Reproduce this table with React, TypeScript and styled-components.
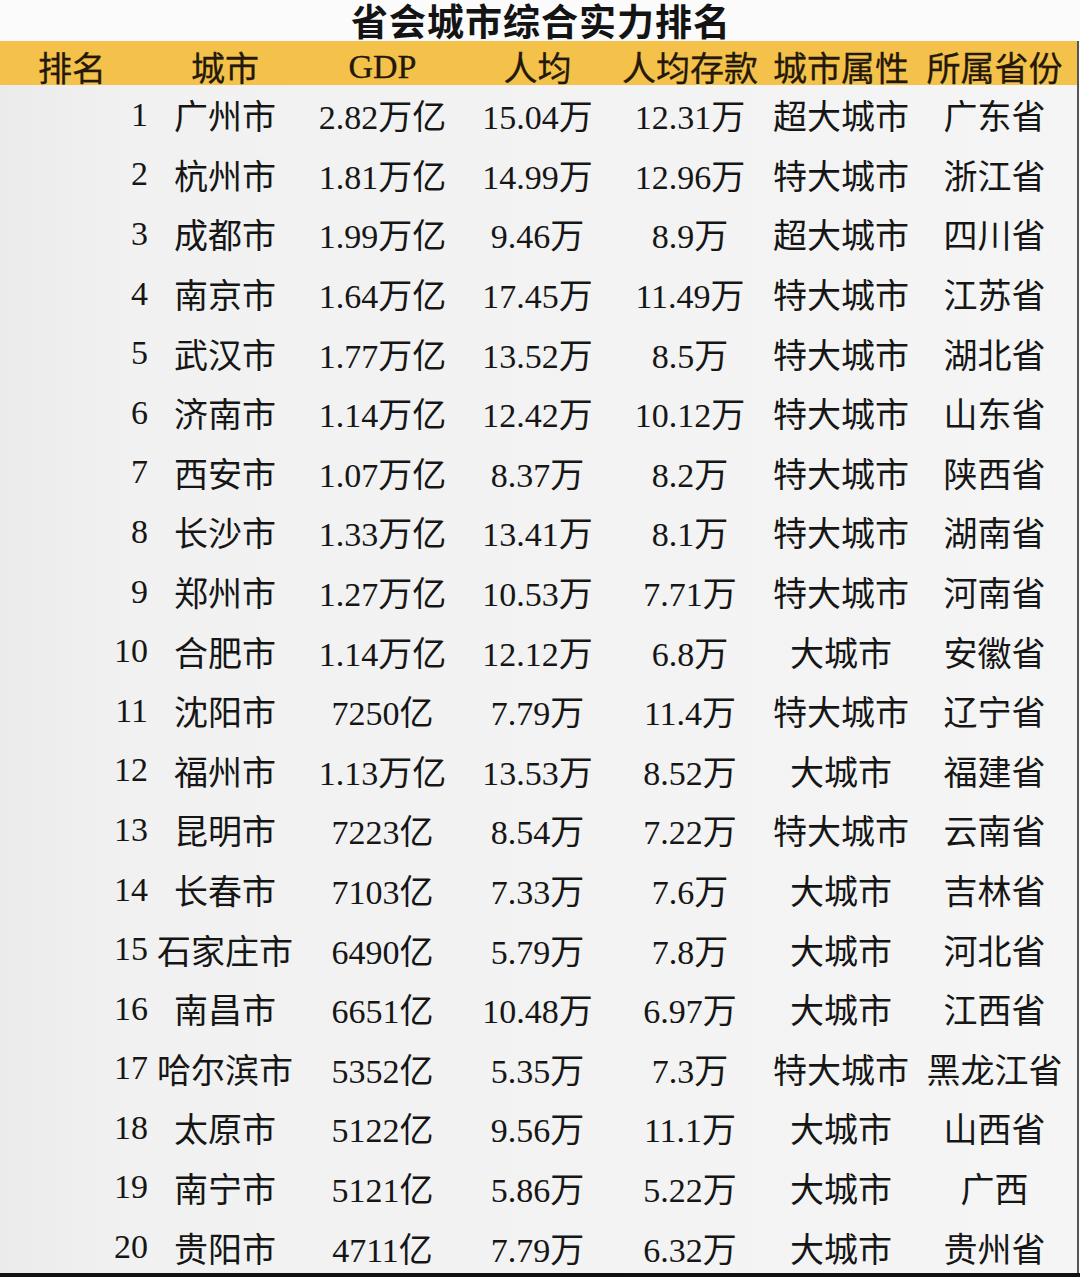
import React, { FC } from 'react';
import styled, { createGlobalStyle } from 'styled-components';

interface ICity {
  rank: number;
  city: string;
  gdp: string;
  perCapita: string;
  deposit: string;
  kind: string;
  province: string;
}

const cities: ICity[] = [
  { rank: 1, city: '广州市', gdp: '2.82万亿', perCapita: '15.04万', deposit: '12.31万', kind: '超大城市', province: '广东省' },
  { rank: 2, city: '杭州市', gdp: '1.81万亿', perCapita: '14.99万', deposit: '12.96万', kind: '特大城市', province: '浙江省' },
  { rank: 3, city: '成都市', gdp: '1.99万亿', perCapita: '9.46万', deposit: '8.9万', kind: '超大城市', province: '四川省' },
  { rank: 4, city: '南京市', gdp: '1.64万亿', perCapita: '17.45万', deposit: '11.49万', kind: '特大城市', province: '江苏省' },
  { rank: 5, city: '武汉市', gdp: '1.77万亿', perCapita: '13.52万', deposit: '8.5万', kind: '特大城市', province: '湖北省' },
  { rank: 6, city: '济南市', gdp: '1.14万亿', perCapita: '12.42万', deposit: '10.12万', kind: '特大城市', province: '山东省' },
  { rank: 7, city: '西安市', gdp: '1.07万亿', perCapita: '8.37万', deposit: '8.2万', kind: '特大城市', province: '陕西省' },
  { rank: 8, city: '长沙市', gdp: '1.33万亿', perCapita: '13.41万', deposit: '8.1万', kind: '特大城市', province: '湖南省' },
  { rank: 9, city: '郑州市', gdp: '1.27万亿', perCapita: '10.53万', deposit: '7.71万', kind: '特大城市', province: '河南省' },
  { rank: 10, city: '合肥市', gdp: '1.14万亿', perCapita: '12.12万', deposit: '6.8万', kind: '大城市', province: '安徽省' },
  { rank: 11, city: '沈阳市', gdp: '7250亿', perCapita: '7.79万', deposit: '11.4万', kind: '特大城市', province: '辽宁省' },
  { rank: 12, city: '福州市', gdp: '1.13万亿', perCapita: '13.53万', deposit: '8.52万', kind: '大城市', province: '福建省' },
  { rank: 13, city: '昆明市', gdp: '7223亿', perCapita: '8.54万', deposit: '7.22万', kind: '特大城市', province: '云南省' },
  { rank: 14, city: '长春市', gdp: '7103亿', perCapita: '7.33万', deposit: '7.6万', kind: '大城市', province: '吉林省' },
  { rank: 15, city: '石家庄市', gdp: '6490亿', perCapita: '5.79万', deposit: '7.8万', kind: '大城市', province: '河北省' },
  { rank: 16, city: '南昌市', gdp: '6651亿', perCapita: '10.48万', deposit: '6.97万', kind: '大城市', province: '江西省' },
  { rank: 17, city: '哈尔滨市', gdp: '5352亿', perCapita: '5.35万', deposit: '7.3万', kind: '特大城市', province: '黑龙江省' },
  { rank: 18, city: '太原市', gdp: '5122亿', perCapita: '9.56万', deposit: '11.1万', kind: '大城市', province: '山西省' },
  { rank: 19, city: '南宁市', gdp: '5121亿', perCapita: '5.86万', deposit: '5.22万', kind: '大城市', province: '广西' },
  { rank: 20, city: '贵阳市', gdp: '4711亿', perCapita: '7.79万', deposit: '6.32万', kind: '大城市', province: '贵州省' },
];

const headers = ['排名', '城市', 'GDP', '人均', '人均存款', '城市属性', '所属省份'];

const App: FC = () => {
  return (
    <>
      <GlobalStyle />
      <Page>
        <Title>省会城市综合实力排名</Title>
        <Table>
          <HeaderRow>
            {headers.map((h, i) => (
              <HeadCell key={h} first={i === 0}>{h}</HeadCell>
            ))}
          </HeaderRow>
          <Body>
            {cities.map((c) => (
              <Row key={c.rank}>
                <RankCell>{c.rank}</RankCell>
                <Cell>{c.city}</Cell>
                <Cell>{c.gdp}</Cell>
                <Cell>{c.perCapita}</Cell>
                <Cell>{c.deposit}</Cell>
                <Cell>{c.kind}</Cell>
                <Cell>{c.province}</Cell>
              </Row>
            ))}
          </Body>
        </Table>
      </Page>
    </>
  );
};

export default App;

const GlobalStyle = createGlobalStyle`
  * {
    box-sizing: border-box;
    margin: 0;
    padding: 0;
  }
  html, body {
    background: #f3f3f3;
    font-family: "Liberation Serif", "Noto Sans CJK SC", serif;
  }
`;

const Page = styled.div`
  position: relative;
  width: 1080px;
  height: 1277px;
  overflow: hidden;
  background: #fbfbfb;

  &::after {
    content: '';
    position: absolute;
    left: 0;
    right: 0;
    bottom: 0;
    height: 4px;
    background: #111;
  }
`;

const Title = styled.h1`
  display: flex;
  align-items: center;
  justify-content: center;
  height: 41px;
  padding-left: 2px;
  line-height: 1;
  font-family: "Noto Sans CJK SC", sans-serif;
  font-size: 37px;
  font-weight: 700;
  color: #141414;
  letter-spacing: 1px;
`;

const Table = styled.div`
  width: 1079px;
  border-right: 2px solid #555;
  background: linear-gradient(to right, #ebebeb 0%, #f1f1f1 12%, #f3f3f3 60%, #f5f5f5 100%);
`;

const columns = '150px 150px 165px 145px 160px 142px 1fr';

const HeaderRow = styled.div`
  display: grid;
  grid-template-columns: ${columns};
  align-items: center;
  height: 44px;
  padding-top: 1px;
  background: #f4c24b;
  color: #24180a;
  font-size: 34px;
`;

const HeadCell = styled.div<{ first?: boolean }>`
  text-align: center;
  white-space: nowrap;
  padding-right: ${(p) => (p.first ? '6px' : '0')};
  -webkit-text-stroke: 0.3px #24180a;
`;

const Body = styled.div`
  padding-top: 0;
`;

const Row = styled.div`
  display: grid;
  grid-template-columns: ${columns};
  align-items: center;
  height: 59.6px;
  font-size: 34px;
  color: #161616;
`;

const Cell = styled.div`
  text-align: center;
  white-space: nowrap;
`;

const RankCell = styled.div`
  text-align: right;
  padding-right: 2px;
  white-space: nowrap;
`;
